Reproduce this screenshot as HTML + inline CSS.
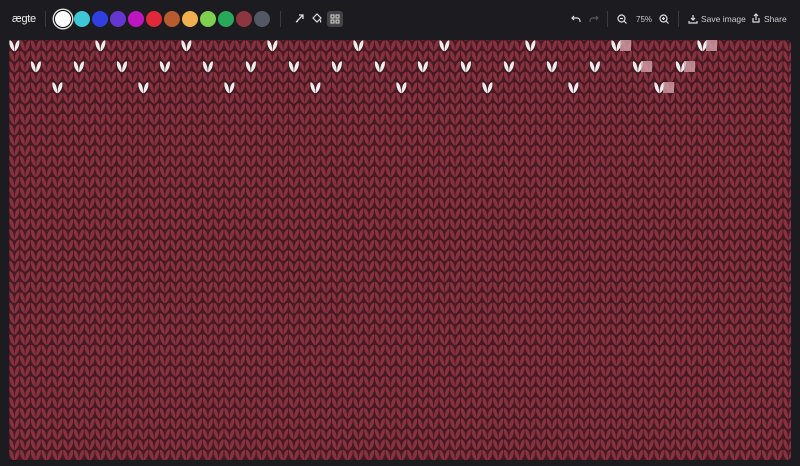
<!DOCTYPE html>
<html><head><style>
html,body{margin:0;padding:0;background:#1c1c20;width:800px;height:466px;overflow:hidden;font-family:"Liberation Sans",sans-serif}
.bar{position:absolute;left:0;top:0;width:800px;height:38px;background:#1c1c20;color:#ddd}
.logo{position:absolute;left:12px;top:13px;font-size:11px;color:#eee;letter-spacing:-0.3px}
.sep{position:absolute;top:11px;width:1px;height:16px;background:#3a3a40}
.dot{position:absolute;top:11px;width:16px;height:16px;border-radius:50%}
.t{position:absolute;top:14px;font-size:8.5px;color:#ccc}
.ic{position:absolute;top:12px}
</style></head><body>
<div class="bar">
<div class="logo">ægte</div>
<div class="sep" style="left:45px"></div>
<div class="dot" style="left:54px;top:10px;width:16px;height:16px;background:#fff;border:1.5px solid #000;box-shadow:0 0 0 1.5px #ddd"></div>
<div class="dot" style="left:74px;background:#3cc8d4"></div>
<div class="dot" style="left:92px;background:#2f3fe0"></div>
<div class="dot" style="left:110px;background:#6636d0"></div>
<div class="dot" style="left:128px;background:#be16be"></div>
<div class="dot" style="left:146px;background:#e0283a"></div>
<div class="dot" style="left:164px;background:#b85c30"></div>
<div class="dot" style="left:182px;background:#f0b050"></div>
<div class="dot" style="left:200px;background:#80d050"></div>
<div class="dot" style="left:218px;background:#28a858"></div>
<div class="dot" style="left:236px;background:#8c3640"></div>
<div class="dot" style="left:254px;background:#545864"></div>
<div class="sep" style="left:280px"></div>
<svg class="ic" style="left:294px" width="12" height="12" viewBox="0 0 12 12" fill="none" stroke="#ddd" stroke-width="1.3"><path d="M3 9L9 3M5 3h4v4M2 10l2-1"/></svg>
<svg class="ic" style="left:311px" width="12" height="12" viewBox="0 0 12 12" fill="none" stroke="#ddd" stroke-width="1.2"><path d="M2 6l4-4 4 4-4 4z M9 8c1 1 1 2 0 2"/></svg>
<div style="position:absolute;left:327px;top:11px;width:16px;height:16px;background:#444;border-radius:3px"></div>
<svg class="ic" style="left:330px;top:14px" width="10" height="10" viewBox="0 0 10 10" fill="none" stroke="#ddd" stroke-width="1"><rect x="1" y="1" width="3" height="3"/><rect x="6" y="1" width="3" height="3"/><rect x="1" y="6" width="3" height="3"/><rect x="6" y="6" width="3" height="3"/></svg>
<svg class="ic" style="left:571px;top:14px" width="10" height="10" viewBox="0 0 10 10" fill="none" stroke="#ddd" stroke-width="1.2"><path d="M3 2L1 4l2 2M1 4h5a3 3 0 0 1 3 3v1"/></svg>
<svg class="ic" style="left:589px;top:14px" width="10" height="10" viewBox="0 0 10 10" fill="none" stroke="#555" stroke-width="1.2"><path d="M7 2l2 2-2 2M9 4H4a3 3 0 0 0-3 3v1"/></svg>
<div class="sep" style="left:607px"></div>
<svg class="ic" style="left:617px;top:14px" width="10" height="10" viewBox="0 0 10 10" fill="none" stroke="#ddd" stroke-width="1.2"><circle cx="4.5" cy="4.5" r="3.5"/><path d="M3 4.5h3M7 7l2.5 2.5"/></svg>
<div class="t" style="left:636px;top:15px;font-size:8px">75%</div>
<svg class="ic" style="left:659px;top:14px" width="10" height="10" viewBox="0 0 10 10" fill="none" stroke="#ddd" stroke-width="1.2"><circle cx="4.5" cy="4.5" r="3.5"/><path d="M3 4.5h3M4.5 3v3M7 7l2.5 2.5"/></svg>
<div class="sep" style="left:678px"></div>
<svg class="ic" style="left:688px;top:14px" width="10" height="10" viewBox="0 0 10 10" fill="none" stroke="#ddd" stroke-width="1.2"><path d="M5 1v5M3 4l2 2 2-2M1 7v2h8V7"/></svg>
<div class="t" style="left:701px">Save image</div>
<svg class="ic" style="left:751px;top:13px" width="10" height="10" viewBox="0 0 10 10" fill="none" stroke="#ddd" stroke-width="1.2"><path d="M5 7V1M3 3l2-2 2 2M2 5v4h6V5"/></svg>
<div class="t" style="left:764px">Share</div>
</div>
<svg style="position:absolute;left:9px;top:40px" width="782" height="422" viewBox="0 0 782 422">
<defs>
<g id="lv"><path d="M0.5 0.2C3.4 0.4 5.2 5 5.2 11.3C2.2 10 -0.3 5 0.5 0.2Z"/><path d="M10.25 0.2C7.35 0.4 5.55 5 5.55 11.3C8.55 10 11.05 5 10.25 0.2Z"/></g>
<pattern id="k" width="10.75" height="10.5" patternUnits="userSpaceOnUse">
<rect width="10.75" height="10.5" fill="#461a23"/>
<use href="#lv" fill="#883240" y="-10.5"/>
<use href="#lv" fill="#883240"/>
</pattern>
</defs>
<rect width="782" height="420" fill="url(#k)" rx="4"/>
<g fill="#eeeeee">
<use href="#lv" x="0" y="0"/><use href="#lv" x="86" y="0"/><use href="#lv" x="172" y="0"/><use href="#lv" x="258" y="0"/><use href="#lv" x="344" y="0"/><use href="#lv" x="430" y="0"/><use href="#lv" x="516" y="0"/><use href="#lv" x="602" y="0"/><use href="#lv" x="688" y="0"/>
<use href="#lv" x="21.5" y="21"/><use href="#lv" x="64.5" y="21"/><use href="#lv" x="107.5" y="21"/><use href="#lv" x="150.5" y="21"/><use href="#lv" x="193.5" y="21"/><use href="#lv" x="236.5" y="21"/><use href="#lv" x="279.5" y="21"/><use href="#lv" x="322.5" y="21"/><use href="#lv" x="365.5" y="21"/><use href="#lv" x="408.5" y="21"/><use href="#lv" x="451.5" y="21"/><use href="#lv" x="494.5" y="21"/><use href="#lv" x="537.5" y="21"/><use href="#lv" x="580.5" y="21"/><use href="#lv" x="623.5" y="21"/><use href="#lv" x="666.5" y="21"/>
<use href="#lv" x="43" y="42"/><use href="#lv" x="129" y="42"/><use href="#lv" x="215" y="42"/><use href="#lv" x="301" y="42"/><use href="#lv" x="387" y="42"/><use href="#lv" x="473" y="42"/><use href="#lv" x="559" y="42"/><use href="#lv" x="645" y="42"/>
</g>
<g fill="#d8a8b0" opacity="0.75">
<rect x="611" y="0" width="11" height="11"/><rect x="697" y="0" width="11" height="11"/>
<rect x="632" y="21" width="11" height="11"/><rect x="675" y="21" width="11" height="11"/>
<rect x="654" y="42" width="11" height="11"/>
</g>
</svg>
</body></html>
